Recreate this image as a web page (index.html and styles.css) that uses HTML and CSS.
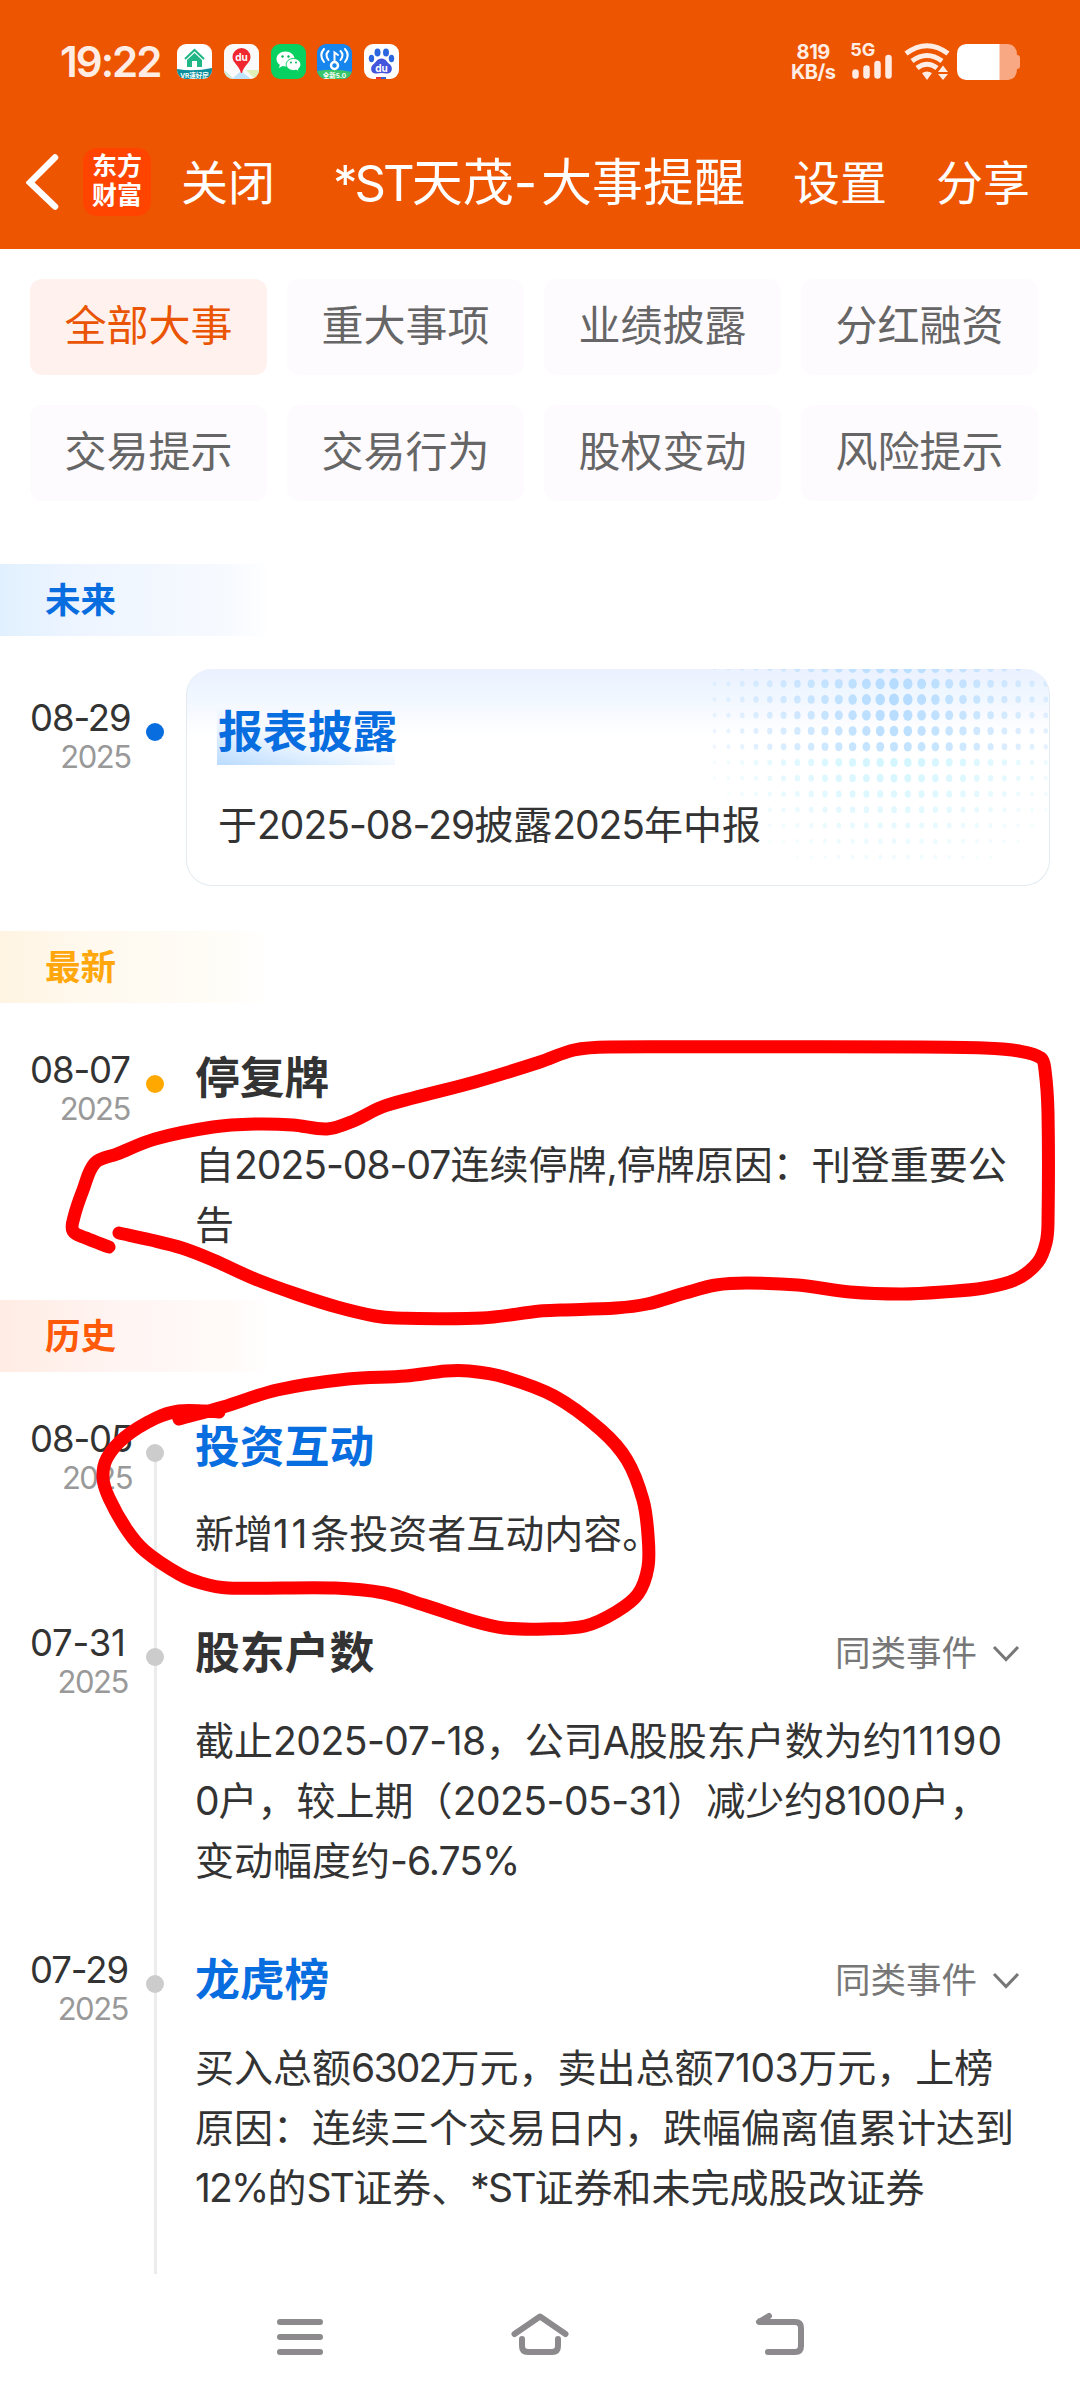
FILE: index.html
```html
<!DOCTYPE html>
<html lang="zh-CN">
<head>
<meta charset="utf-8">
<title>*ST天茂-大事提醒</title>
<link rel="stylesheet" href="styles.css">
</head>
<body>
<div class="screen">
  <header class="top">
    <div class="status">
      <span class="clock">19:22</span>
      <div class="apps">
        <svg class="app" viewBox="0 0 35 35"><rect width="35" height="35" fill="#fff"/><path d="M0 25Q17 28 35 24V35H0Z" fill="#0b8f9c"/><path d="M8 15L17.500 6L27 15" fill="none" stroke="#20b685" stroke-width="2"/><path d="M10 16L17.500 9L25 16V23H20V17H15V23H10Z" fill="#20b685"/><text x="17.500" y="33.500" class="app-tag">VR速好房</text></svg>
        <svg class="app" viewBox="0 0 35 35"><rect width="35" height="35" fill="#fafafa"/><path d="M0 26L10 35H0Z" fill="#ccebd8"/><path d="M17 27L27 35H8Z" fill="#bfe3fb"/><path d="M22 26H35V35H31Z" fill="#e0efb8"/><path d="M17.500 4A9 9 0 0 1 26.500 13C26.500 19 20 21 18 29H17C15 21 8.500 19 8.500 13A9 9 0 0 1 17.500 4Z" fill="#f0272f"/><text x="17.500" y="17" class="app-du">du</text></svg>
        <svg class="app" viewBox="0 0 35 35"><rect width="35" height="35" fill="#07d160"/><path d="M14.500 7.500C9.500 7.500 5.500 10.800 5.500 15C5.500 17.400 6.800 19.500 8.800 20.800L8 24L11.500 22.100Q13 22.500 14.500 22.500C19.500 22.500 23.500 19.200 23.500 15S19.500 7.500 14.500 7.500Z" fill="#fff"/><path d="M22.500 14.500C18.300 14.500 15.200 17.200 15.200 20.500S18.300 26.500 22.500 26.500Q23.800 26.500 25 26.100L28 27.500L27.400 25C29 23.900 29.800 22.300 29.800 20.500C29.800 17.200 26.700 14.500 22.500 14.500Z" fill="#fff" stroke="#07d160"/><g fill="#07b255"><circle cx="11.500" cy="12.500" r="1.200"/><circle cx="17.500" cy="12.500" r="1.200"/><circle cx="20" cy="18.500" r="1"/><circle cx="25" cy="18.500" r="1"/></g></svg>
        <svg class="app" viewBox="0 0 35 35"><rect width="35" height="35" fill="#1785ee"/><path d="M0 27Q17 24 35 28V35H0Z" fill="#3ac46a"/><g fill="none" stroke="#fff" stroke-width="2" stroke-linecap="round"><path d="M7 5Q1.500 11 7 18M11.500 7Q7.500 11 11.500 16M28 5Q33.500 11 28 18M23.500 7Q27.500 11 23.500 16M17.500 18V8.500L21 11"/><circle cx="17.500" cy="21.500" r="3.500" stroke-width="2.500"/></g><text x="17.500" y="33.800" class="app-tag">全新5.0</text></svg>
        <svg class="app" viewBox="0 0 35 35"><rect width="35" height="35" fill="#fff"/><g fill="#2a66df"><ellipse cx="13.500" cy="8.500" rx="3" ry="4"/><ellipse cx="22" cy="8.500" rx="3" ry="4"/><ellipse cx="7.500" cy="14.500" rx="2.700" ry="3.700"/><ellipse cx="27.500" cy="14.500" rx="2.700" ry="3.700"/><path d="M17.500 14.500C22 14.500 23 18.500 26 20.500C30 24.500 27 30.500 22.500 29.500Q17.500 28.500 12.500 29.500C8 30.500 5 24.500 9 20.500C12 18.500 13 14.500 17.500 14.500Z" fill="#4355dc"/></g><path d="M12 33H17V35H12Z" fill="#e33"/><path d="M17 33H22V35H17Z" fill="#36c"/><text x="17.500" y="27.500" class="app-du">du</text></svg>
      </div>
      <div class="net"><span>819</span><span>KB/s</span></div>
      <div class="signal"><span>5G</span>
        <svg width="42" height="26" viewBox="0 0 42 26" stroke="#ffede5" stroke-width="6.500" stroke-linecap="round"><path d="M5.500 18.500V21.500M16.500 14.500V21.500M27.500 10V21.500M38.500 4V21.500"/></svg>
      </div>
      <svg class="wifi" width="46" height="38" viewBox="0 0 46 38" fill="none" stroke="#ffede5" stroke-width="5"><path d="M2 10.500Q23 -5 44 10.500"/><path d="M8 18Q23 7 38 18"/><path d="M13 25Q23 17.500 33 25"/><path d="M18 30Q23 27 28 30L23 37Z" fill="#ffede5" stroke="none"/><path d="M39 22.500L44 29H34ZM39 37L44 31H34Z" fill="#ffede5" stroke="none"/></svg>
      <svg class="battery" width="64" height="36" viewBox="0 0 64 36"><path d="M42 0H51Q60 1 60 11Q63 11 63 14V22Q63 25 60 25Q60 35 51 36H42Z" fill="#f8a983"/><path d="M42.500 0H9Q0 1 0 10V26Q0 35 9 36H42.500Z" fill="#fff"/></svg>
    </div>
    <nav class="bar">
      <svg class="back" width="34" height="58" viewBox="0 0 34 58"><path d="M29 4.500L4 29.500L29 53.500" fill="none" stroke="#fff" stroke-width="6.500" stroke-linecap="round"/></svg>
      <div class="brand">东方<br>财富</div>
      <a class="act close">关闭</a>
      <h1 class="title"><span class="star">*ST</span>天茂<span class="dash">-</span>大事提醒</h1>
      <a class="act set">设置</a>
      <a class="act">分享</a>
    </nav>
  </header>

  <div class="chips">
    <a class="chip on">全部大事</a><a class="chip">重大事项</a><a class="chip">业绩披露</a><a class="chip">分红融资</a>
    <a class="chip">交易提示</a><a class="chip">交易行为</a><a class="chip">股权变动</a><a class="chip">风险提示</a>
  </div>

  <section>
    <h2 class="label future">未来</h2>
    <article class="item item-card">
      <div class="when"><span class="day">08-29</span><span class="year">2025</span></div>
      <i class="dot blue"></i>
      <div class="card">
        <svg class="halftone" width="340" height="216" viewBox="0 0 340 216"></svg>
        <h3 class="name link mark">报表披露</h3>
        <p class="text">于<span class="n">2025-08-29</span>披露<span class="n">2025</span>年中报</p>
      </div>
    </article>
  </section>

  <section>
    <h2 class="label latest">最新</h2>
    <article class="item item-latest">
      <div class="when"><span class="day">08-07</span><span class="year">2025</span></div>
      <i class="dot amber"></i>
      <div class="event">
        <h3 class="name">停复牌</h3>
        <p class="text">自<span class="n">2025-08-07</span>连续停牌<span class="n">,</span>停牌原因：刊登重要公<br>告</p>
      </div>
    </article>
  </section>

  <section>
    <h2 class="label past">历史</h2>
    <div class="history">
      <article class="item">
        <div class="when"><span class="day">08-05</span><span class="year">2025</span></div>
        <i class="dot"></i>
        <div class="event">
          <h3 class="name link">投资互动</h3>
          <p class="text">新增<span class="n ones">11</span>条投资者互动内容。</p>
        </div>
      </article>
      <article class="item">
        <div class="when"><span class="day loose">07-31</span><span class="year">2025</span></div>
        <i class="dot"></i>
        <div class="event">
          <div class="head"><h3 class="name">股东户数</h3><a class="same">同类事件<svg width="28" height="18" viewBox="0 0 28 18"><path d="M2 2L14 14.500L26 2" fill="none" stroke="#777" stroke-width="3"/></svg></a></div>
          <p class="text">截止<span class="n semi">2025-07-18</span>，公司<span class="n">A</span>股股东户数为约<span class="n wide">11190</span><br><span class="n">0</span>户，较上期（<span class="n semi">2025-05-31</span>）减少约<span class="n semi">8100</span>户，<br>变动幅度约<span class="n">-6.75%</span></p>
        </div>
      </article>
      <article class="item last">
        <div class="when"><span class="day">07-29</span><span class="year">2025</span></div>
        <i class="dot"></i>
        <div class="event">
          <div class="head"><h3 class="name link">龙虎榜</h3><a class="same">同类事件<svg width="28" height="18" viewBox="0 0 28 18"><path d="M2 2L14 14.500L26 2" fill="none" stroke="#777" stroke-width="3"/></svg></a></div>
          <p class="text">买入总额<span class="n tight">6302</span>万元，卖出总额<span class="n semi">7103</span>万元，上榜<br>原因：连续三个交易日内，跌幅偏离值累计达到<br><span class="n tight">12%</span>的<span class="n tight">ST</span>证券、<span class="n tight">*ST</span>证券和未完成股改证券</p>
        </div>
      </article>
    </div>
  </section>

  <footer class="keys">
    <svg width="50" height="44" viewBox="0 0 50 44"><path d="M5 7H45M5 22H45M5 37H45"/></svg>
    <svg width="60" height="44" viewBox="0 0 60 44"><path d="M4.500 19L30 1.500L55.500 19M12 24V31Q12 37 18 37H42Q48 37 48 31V24"/></svg>
    <svg width="50" height="44" viewBox="0 0 50 44"><path d="M14 1L4 7H40Q46 7 46 13V31Q46 37 40 37H13M5 6L12 6"/></svg>
  </footer>

  <svg class="ink" width="1080" height="2400" viewBox="0 0 1080 2400">
    <path data-points="119,1233 151,1240 182,1248 213,1260 255,1279 296,1294 337,1307 375,1316 396,1318 482,1318 540,1311 561,1310 616,1308 647,1304 685,1293 716,1285 747,1283 798,1285 850,1292 902,1294 943,1292 984,1288 1017,1279 1038,1262 1046,1243 1048,1223 1048,1113 1045,1070 1041,1058 1019,1051 984,1048 919,1047 609,1047 574,1050 540,1062 475,1082 413,1098 382,1107 351,1122 327,1129 293,1125 255,1124 213,1127 155,1139 117,1154 95,1163 83,1190 74,1217 73,1231 86,1238 109,1247"/>
    <path data-points="219,1412 205,1411 179,1411 156,1418 125,1437 107,1458 103,1478 109,1498 127,1530 145,1551 179,1574 201,1583 228,1588 335,1588 384,1593 424,1605 473,1621 504,1628 545,1629 585,1626 616,1612 638,1594 648,1567 648,1535 643,1500 627,1460 601,1430 554,1396 504,1377 469,1371 446,1371 406,1376 348,1379 277,1390 223,1407 179,1419"/>
  </svg>
</div>
<script src="draw.js"></script>
</body>
</html>
```
FILE: styles.css
```css
* { box-sizing: border-box; margin: 0; padding: 0; }
body {
  background: #fff;
  font-family: Inter, "Noto Sans CJK SC", sans-serif;
  color: #333;
}
.screen { position: relative; width: 1080px; height: 2400px; overflow: hidden; display: flex; flex-direction: column; }

/* header */
.top { height: 249px; background: #ed5500; color: #fff; flex: none; }
.status { height: 125px; padding: 0 0 2px 60px; display: flex; align-items: center; color: #ffede5; }
.clock { width: 117px; font-size: 42px; font-weight: 600; letter-spacing: -2px; line-height: 50px; white-space: nowrap; }
.apps { display: flex; gap: 11.8px; }
.app { width: 35px; height: 35px; border-radius: 9px; display: block; }
.app-tag { font-size: 6.500px; font-weight: 700; fill: #fff; text-anchor: middle; }
.app-du { font-size: 10px; font-weight: 700; fill: #fff; text-anchor: middle; }
.net { margin-left: 392px; width: 44px; display: flex; flex-direction: column; align-items: center; font-size: 20px; font-weight: 700; line-height: 20px; letter-spacing: -0.5px; }
.signal { margin-left: 15px; width: 44px; font-size: 18px; font-weight: 700; line-height: 14px; height: 37px; position: relative; }
.signal svg { position: absolute; left: 0; bottom: 0; }
.wifi { margin-left: 10px; }
.battery { margin-left: 7px; }
.bar { display: flex; align-items: center; height: 114px; padding-left: 26px; }
.brand { margin-left: 23px; width: 68px; height: 68px; border-radius: 14px; background: #ff4400; font-size: 25px; line-height: 29px; font-weight: 700; text-align: center; padding-top: 4px; }
.act { font-size: 47px; line-height: 68px; white-space: nowrap; padding-top: 2px; }
.close { margin-left: 30px; }
.title { margin-left: 58px; width: 460px; font-size: 51px; line-height: 68px; font-weight: 400; white-space: nowrap; padding-top: 3px; }
.star { letter-spacing: -3px; font-size: 49px; }
.dash { letter-spacing: 4px; }
.set { margin-right: 49px; }

/* filters */
.chips { display: grid; grid-template-columns: repeat(4, 237px); gap: 30px 20px; padding: 30px 0 0 30px; }
.chip { height: 96px; line-height: 94px; border-radius: 12px; background: #fefbff; color: #666; font-size: 42px; text-align: center; white-space: nowrap; }
.chip.on { background: #fff2ee; color: #e95504; }

/* section labels */
.label { height: 72px; width: 270px; padding-left: 45px; font-size: 35.500px; line-height: 73px; font-weight: 700; }
.future { margin-top: 63px; color: #086ddf; background: linear-gradient(90deg, #e1f0ff, #eef5ff 30%, #f7faff 85%, #fff); }
.latest { margin-top: 45px; color: #ffa70c; background: linear-gradient(90deg, #fff4e2, #fff9ef 35%, #fffdf8 85%, #fff); }
.past { margin-top: 45px; color: #ff5a09; background: linear-gradient(90deg, #ffece4, #fff5f3 45%, #fffaf8 85%, #fff); }

/* timeline rows */
.item { display: grid; grid-template-columns: 116px 18px 1fr; padding-left: 30px; position: relative; }
.when { width: max-content; display: flex; flex-direction: column; text-align: right; font-size: 36.500px; line-height: 40px; letter-spacing: -1.1px; white-space: nowrap; }
.year { font-size: 31px; line-height: 38px; color: #999; letter-spacing: -1.5px; }
.loose { letter-spacing: -0.2px; margin-right: 2px; }
.dot { width: 18px; height: 18px; border-radius: 50%; background: #ccc; margin-top: 25px; }
.blue { background: #086ddf; }
.amber { background: #ffa800; }
.event { padding-left: 31px; padding-bottom: 59px; }
.name { font-size: 44.800px; line-height: 56px; font-weight: 700; white-space: nowrap; }
.link { color: #086ddf; }
.text { margin-top: 29px; font-size: 39px; line-height: 60px; white-space: nowrap; }
.n { letter-spacing: -1px; }
.tight { letter-spacing: -1.8px; }
.semi { letter-spacing: -0.5px; }
.wide { letter-spacing: 1px; }
.ones { letter-spacing: 2.7px; }
.head { display: flex; justify-content: space-between; align-items: center; height: 59px; padding: 0 60px 0 0; }
.same { display: flex; align-items: center; gap: 15px; font-size: 35.500px; line-height: 50px; color: #777; white-space: nowrap; padding-top: 2px; }

.card { position: relative; margin-left: 22px; width: 864px; height: 217px; border: 1px solid #e3ebf0; border-top: 0; border-radius: 26px; padding: 31px 0 0 30px; background: linear-gradient(#ebf1ff, #eef6ff 22px, #f6f9ff 42px, #fff 66px); overflow: hidden; }
.item-card { padding-top: 33px; }
.item-card .when { margin-top: -4px; padding-top: 33px; }
.item-card .dot { margin-top: 54px; }
.halftone { position: absolute; right: 0; top: 0; }
.card .text { position: relative; margin-top: 30px; padding-left: 1px; }
.mark { position: relative; width: 178px; height: 65px; line-height: 65px; padding-left: 1px; background: linear-gradient(14deg, #b9dbff, rgba(225, 240, 255, .7) 35%, rgba(255, 255, 255, 0) 54%); }
.item-latest { padding-top: 47px; }
.item-latest .event { padding-bottom: 0; height: 205px; }
.history { padding-top: 47px; position: relative; }
.history::before { content: ""; position: absolute; left: 154px; top: 81px; width: 3px; height: 821px; background: #ececec; }

/* system keys */
.keys { position: absolute; left: 275px; right: 275px; top: 2315px; display: flex; justify-content: space-between; }
.keys svg { fill: none; stroke: #8c8a8c; stroke-width: 6; stroke-linecap: round; stroke-linejoin: round; overflow: visible; }

/* hand-drawn marks */
.ink { position: absolute; left: 0; top: 0; fill: none; stroke: #fe0000; stroke-width: 13; stroke-linecap: round; stroke-linejoin: round; pointer-events: none; }
```
FILE: draw.js
```js
// Smooth each freehand stroke through its recorded points.
document.querySelectorAll('.ink path').forEach(function (path) {
  var p = path.dataset.points.split(' ').map(function (s) { return s.split(',').map(Number); });
  var d = 'M' + p[0];
  for (var i = 0; i < p.length - 1; i++) {
    var a = p[i - 1] || p[i], b = p[i], c = p[i + 1], e = p[i + 2] || c;
    var len = Math.hypot(c[0] - b[0], c[1] - b[1]) / 3;
    var k1 = len / (Math.hypot(c[0] - a[0], c[1] - a[1]) || 1);
    var k2 = len / (Math.hypot(e[0] - b[0], e[1] - b[1]) || 1);
    d += 'C' + [b[0] + (c[0] - a[0]) * k1, b[1] + (c[1] - a[1]) * k1,
      c[0] - (e[0] - b[0]) * k2, c[1] - (e[1] - b[1]) * k2, c[0], c[1]].join(' ');
  }
  path.setAttribute('d', d);
});

// Halftone decoration: dots shrink and fade away from the centre.
var tone = document.querySelector('.halftone');
for (var row = 0; row < 13; row++) {
  for (var col = -14; col <= 11; col++) {
    var x = 185 + col * 13.8, y = -1 + row * 15.75;
    var f = 1 - Math.hypot(col * 13.8 / 205, (y - 28) / 185);
    if (f <= 0) continue;
    var dot = document.createElementNS('http://www.w3.org/2000/svg', 'ellipse');
    dot.setAttribute('cx', x);
    dot.setAttribute('cy', y);
    dot.setAttribute('rx', 1.4 + 3.6 * f);
    dot.setAttribute('ry', 1.8 + 4.2 * f);
    dot.setAttribute('fill', y > 85 ? '#c4f2ff' : '#b5dcff');
    dot.setAttribute('opacity', Math.min(1, 0.15 + f * 0.9));
    tone.appendChild(dot);
  }
}
```
